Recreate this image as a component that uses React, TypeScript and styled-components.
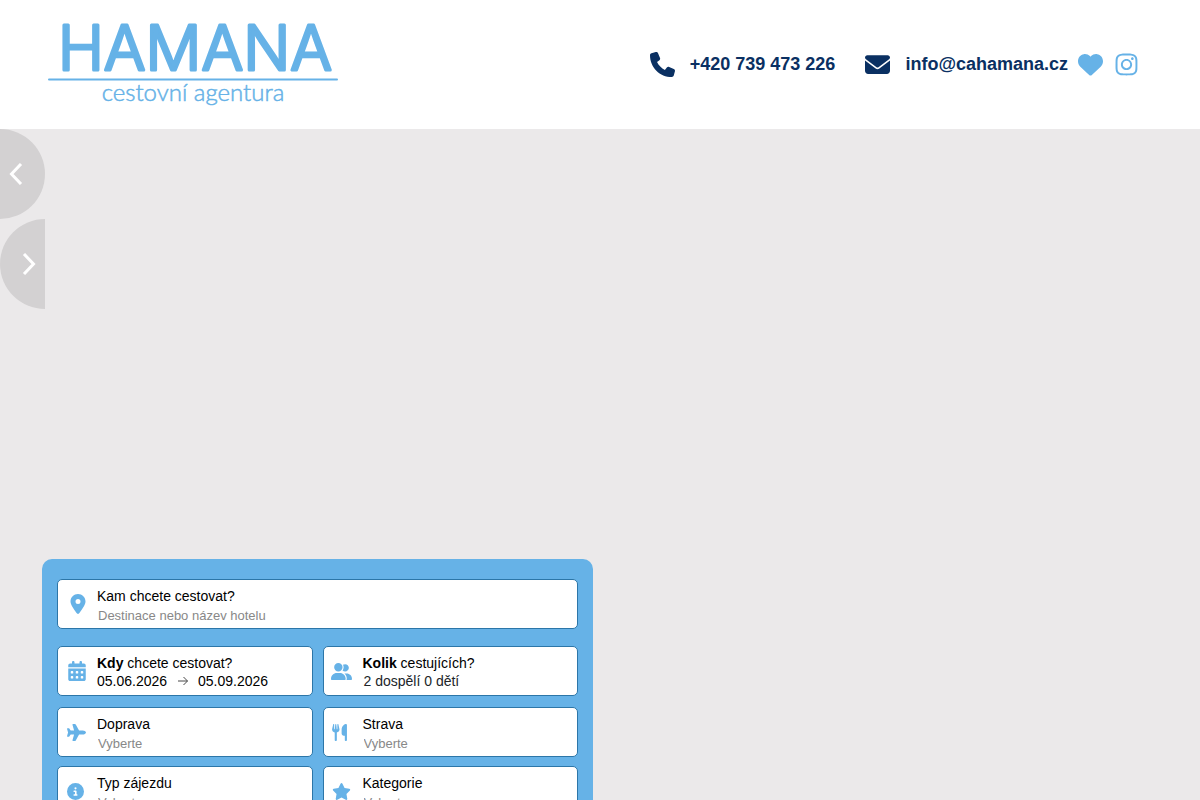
import React from 'react';
import type { ReactNode } from 'react';
import styled, { createGlobalStyle } from 'styled-components';
import {
  FaPhone,
  FaEnvelope,
  FaHeart,
  FaInstagram,
  FaLocationDot,
  FaCalendarDays,
  FaUserGroup,
  FaPlane,
  FaUtensils,
  FaCircleInfo,
  FaStar,
} from 'react-icons/fa6';

const blue = '#66b2e7';
const navy = '#0a3062';
const fontStack = '"Liberation Sans", Arial, sans-serif';

const GlobalStyle = createGlobalStyle`
  *, *::before, *::after { box-sizing: border-box; }
  body {
    margin: 0;
    background: #ebe9ea;
    color: #000;
    font-family: ${fontStack};
  }
  button, input, select { font-family: inherit; }
`;

const Header = styled.header`
  display: flex;
  align-items: center;
  justify-content: space-between;
  height: 129px;
  padding: 0 61px 0 48px;
  background: #fff;
`;

const LogoLink = styled.a`
  display: block;
  line-height: 0;
`;

const Contacts = styled.nav`
  display: flex;
  align-items: center;
`;

const ContactLink = styled.a`
  display: flex;
  align-items: center;
  gap: 15px;
  margin-right: 30px;
  color: ${navy};
  font-size: 18px;
  font-weight: 700;
  line-height: 24px;
  text-decoration: none;
`;

const ContactText = styled.span`
  padding-bottom: 2px;
`;

const IconLinks = styled.div`
  display: flex;
  gap: 11px;
  margin-left: -20px;
`;

const IconLink = styled.a`
  display: flex;
  color: ${blue};
`;

const Slider = styled.section`
  display: flex;
  flex-direction: column;
  align-items: flex-start;
  min-height: 430px;
`;

const SlideButton = styled.button<{ $side: 'left' | 'right' }>`
  display: flex;
  align-items: center;
  justify-content: ${(p) => (p.$side === 'left' ? 'flex-start' : 'flex-end')};
  width: 45px;
  height: 90px;
  padding: 0 9px;
  border: 0;
  border-radius: ${(p) => (p.$side === 'left' ? '0 45px 45px 0' : '45px 0 0 45px')};
  background: #d3d1d2;
  cursor: pointer;
`;

const SearchArea = styled.main`
  padding: 0 42px 40px;
`;

const SearchForm = styled.form`
  display: flex;
  flex-direction: column;
  max-width: 551px;
  padding: 20px 15px;
  border-radius: 10px;
  background: ${blue};
`;

const Row = styled.div<{ $top?: number }>`
  display: grid;
  grid-auto-flow: column;
  grid-auto-columns: minmax(0, 1fr);
  gap: 10px;
  margin-top: ${(p) => p.$top ?? 0}px;
`;

const FieldBox = styled.div`
  display: flex;
  height: 50px;
  border: 1px solid #2c76a8;
  border-radius: 5px;
  background: #fff;
`;

const FieldIcon = styled.span<{ $inset: number }>`
  display: flex;
  align-items: center;
  flex: none;
  width: 39px;
  padding-left: ${(p) => p.$inset}px;
  color: ${blue};
`;

const FieldBody = styled.div`
  display: flex;
  flex: 1;
  flex-direction: column;
  min-width: 0;
  padding-top: 7px;
`;

const Label = styled.label`
  font-size: 14px;
  line-height: 18px;
`;

const TextInput = styled.input`
  width: 100%;
  height: 20px;
  padding: 0 1px;
  border: 0;
  outline: 0;
  background: none;
  font-size: 13px;
  &::placeholder { color: #888; opacity: 1; }
`;

const Dates = styled.div`
  display: flex;
  align-items: center;
  gap: 10px;
`;

const DateInput = styled.input`
  width: 71px;
  height: 18px;
  padding: 0;
  border: 0;
  outline: 0;
  background: none;
  font-size: 14px;
`;

const GuestButton = styled.button`
  height: 18px;
  padding: 0 1px;
  border: 0;
  background: none;
  color: #212529;
  font-size: 14px;
  line-height: 18px;
  text-align: left;
  cursor: pointer;
`;

const Select = styled.select`
  width: 100%;
  height: 20px;
  padding: 0 1px;
  border: 0;
  outline: 0;
  appearance: none;
  background: none;
  color: #888;
  font-size: 13px;
`;

function Logo() {
  return (
    <svg width="290" height="114" viewBox="0 -12 290 114" role="img" aria-label="HAMANA cestovní agentura">
      <g fill={blue} stroke={blue} strokeLinejoin="round" strokeLinecap="round">
        <text x="147" y="50" fontSize="62" fontFamily="Inter, sans-serif" fontWeight="300" textAnchor="middle" strokeWidth="3">HAMANA</text>
        <text x="145" y="81" fontSize="24" fontFamily="Lato, sans-serif" fontWeight="300" strokeWidth="0.5" textAnchor="middle">cestovní agentura</text>
        <path d="M1 59.5H289" strokeWidth="2" />
      </g>
    </svg>
  );
}

function Chevron({ side }: { side: 'left' | 'right' }) {
  return (
    <svg width="14" height="22" viewBox="0 0 14 22" fill="none" stroke="#fff" strokeWidth="3" aria-hidden="true">
      <path d={side === 'left' ? 'M12 1L2.5 11L12 21' : 'M2 1L11.5 11L2 21'} />
    </svg>
  );
}

function Arrow() {
  return (
    <svg width="10" height="10" viewBox="0 0 10 10" fill="none" stroke="#484848" aria-hidden="true">
      <path d="M0 5H9.5M5.5 1L9.5 5L5.5 9" />
    </svg>
  );
}

interface FieldProps {
  icon: ReactNode;
  inset?: number;
  id: string;
  label: ReactNode;
  children: ReactNode;
}

function Field({ icon, inset = 9, id, label, children }: FieldProps) {
  return (
    <FieldBox>
      <FieldIcon $inset={inset}>{icon}</FieldIcon>
      <FieldBody>
        <Label htmlFor={id}>{label}</Label>
        {children}
      </FieldBody>
    </FieldBox>
  );
}

function Choice({ id }: { id: string }) {
  return (
    <Select id={id} defaultValue="">
      <option value="">Vyberte</option>
    </Select>
  );
}

export default function App() {
  return (
    <>
      <GlobalStyle />
      <Header>
        <LogoLink href="#"><Logo /></LogoLink>
        <Contacts>
          <ContactLink href="tel:+420739473226">
            <FaPhone size={25} />
            <ContactText>+420 739 473 226</ContactText>
          </ContactLink>
          <ContactLink href="mailto:info@cahamana.cz">
            <FaEnvelope size={25} />
            <ContactText>info@cahamana.cz</ContactText>
          </ContactLink>
          <IconLinks>
            <IconLink href="#oblibene" aria-label="Oblíbené"><FaHeart size={25} /></IconLink>
            <IconLink href="#instagram" aria-label="Instagram"><FaInstagram size={25} /></IconLink>
          </IconLinks>
        </Contacts>
      </Header>
      <Slider>
        <SlideButton type="button" $side="left" aria-label="Předchozí"><Chevron side="left" /></SlideButton>
        <SlideButton type="button" $side="right" aria-label="Další"><Chevron side="right" /></SlideButton>
      </Slider>
      <SearchArea>
        <SearchForm>
          <Row>
            <Field id="kam" icon={<FaLocationDot size={20} />} inset={10} label="Kam chcete cestovat?">
              <TextInput id="kam" placeholder="Destinace nebo název hotelu" />
            </Field>
          </Row>
          <Row $top={17}>
            <Field id="kdy" icon={<FaCalendarDays size={20} />} label={<><b>Kdy</b> chcete cestovat?</>}>
              <Dates>
                <DateInput id="kdy" defaultValue="05.06.2026" />
                <Arrow />
                <DateInput aria-label="Datum do" defaultValue="05.09.2026" />
              </Dates>
            </Field>
            <Field id="kolik" icon={<FaUserGroup size={21} />} inset={7} label={<><b>Kolik</b> cestujících?</>}>
              <GuestButton id="kolik" type="button">2 dospělí 0 dětí</GuestButton>
            </Field>
          </Row>
          <Row $top={11}>
            <Field id="doprava" icon={<FaPlane size={19} />} label="Doprava"><Choice id="doprava" /></Field>
            <Field id="strava" icon={<FaUtensils size={17} />} inset={7} label="Strava"><Choice id="strava" /></Field>
          </Row>
          <Row $top={9}>
            <Field id="typ" icon={<FaCircleInfo size={17} />} label="Typ zájezdu"><Choice id="typ" /></Field>
            <Field id="kategorie" icon={<FaStar size={19} />} inset={8} label="Kategorie"><Choice id="kategorie" /></Field>
          </Row>
        </SearchForm>
      </SearchArea>
    </>
  );
}
